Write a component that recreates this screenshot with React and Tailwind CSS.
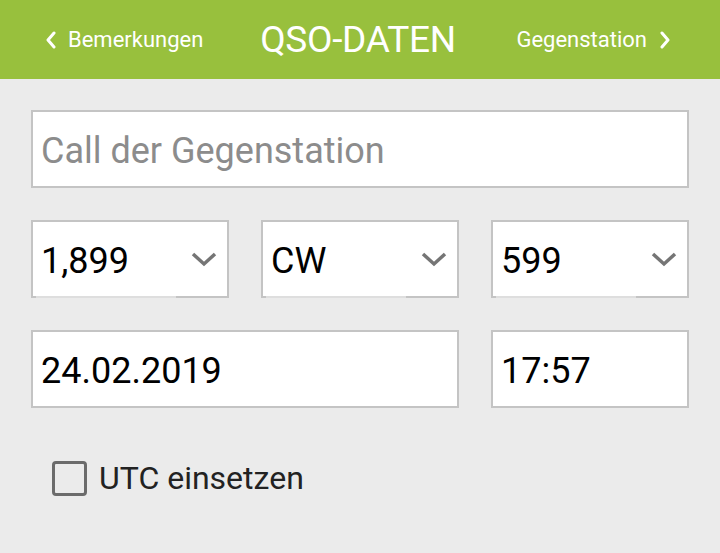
import React from 'react';

const font = { fontFamily: 'Roboto, "Liberation Sans", sans-serif' };

function Chevron({ dir }) {
  const d = dir === 'left' ? 'M9 2 L3 9 L9 16' : 'M3 2 L9 9 L3 16';
  return (
    <svg width="12" height="18" viewBox="0 0 12 18">
      <path d={d} fill="none" stroke="#fff" strokeWidth="3" strokeLinecap="round" strokeLinejoin="round" />
    </svg>
  );
}

function Select({ value }) {
  return (
    <div className="relative flex-1 h-[78px] bg-white border-2 border-[#c4c4c4] flex items-center justify-between pl-[8px] pr-[10px]">
      <span className="text-[36px] text-black leading-none pt-[3px]">{value}</span>
      <svg width="26" height="16" viewBox="0 0 26 16">
        <path d="M2 3 L13 13 L24 3" fill="none" stroke="#757575" strokeWidth="3.5" />
      </svg>
      <div className="absolute -bottom-[2px] left-[3px] w-[140px] h-[2px] bg-[#dedede]" />
    </div>
  );
}

function Field({ value, className = '' }) {
  return (
    <div className={`h-[78px] bg-white border-2 border-[#c4c4c4] flex items-center pl-[8px] ${className}`}>
      <span className="text-[36px] text-black leading-none pt-[3px]">{value}</span>
    </div>
  );
}

export default function App() {
  return (
    <div className="w-[720px] h-[553px] bg-[#ebebeb] flex flex-col" style={font}>
      <div className="h-[79px] bg-[#98c03d] flex items-center pl-[45px] pr-[49px] text-white">
        <div className="flex items-center gap-[11px] w-[200px]">
          <Chevron dir="left" />
          <span className="text-[22px]">Bemerkungen</span>
        </div>
        <div className="flex-1 text-center text-[37px] tracking-[-0.3px]">QSO-DATEN</div>
        <div className="flex items-center justify-end gap-[12px] w-[200px]">
          <span className="text-[22px]">Gegenstation</span>
          <Chevron dir="right" />
        </div>
      </div>

      <div className="flex flex-col px-[31px] pt-[31px] gap-[32px]">
        <div className="h-[78px] bg-white border-2 border-[#c4c4c4] flex items-center pl-[8px]">
          <span className="text-[36px] text-[#8c8c8c] leading-none pt-[3px]">Call der Gegenstation</span>
        </div>
        <div className="flex gap-[32px]">
          <Select value="1,899" />
          <Select value="CW" />
          <Select value="599" />
        </div>
        <div className="flex gap-[32px]">
          <Field value="24.02.2019" className="w-[428px]" />
          <Field value="17:57" className="flex-1" />
        </div>
      </div>

      <div className="flex items-center gap-[12px] pl-[52px] pt-[52px]">
        <div className="w-[35px] h-[35px] rounded-[4px] border-[3px] border-[#6b6b6b]" />
        <span className="text-[32px] leading-[36px] text-[#222]">UTC einsetzen</span>
      </div>
    </div>
  );
}
